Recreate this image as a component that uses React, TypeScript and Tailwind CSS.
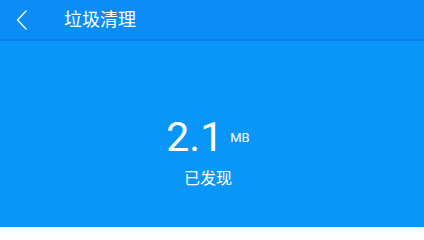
export default function App() {
  return (
    <div
      className="flex h-[227px] w-[424px] flex-col overflow-hidden bg-[#0896f9] text-white"
      style={{ fontFamily: '"Roboto", "Noto Sans CJK SC", sans-serif' }}
    >
      {/* Header */}
      <div className="flex h-[41px] items-center border-b-2 border-[#0a80e4] bg-[#0b8cf6]">
        <svg
          width="12"
          height="22"
          viewBox="0 0 12 22"
          className="ml-[16px]"
          fill="none"
          stroke="white"
          strokeWidth="1.3"
        >
          <path d="M10.5 1.5 L1.5 11 L10.5 20.5" />
        </svg>
        <span className="ml-[36px] text-[18px] leading-none">垃圾清理</span>
      </div>

      {/* Body */}
      <div className="flex flex-1 flex-col items-center pr-[8px] pt-[76px]">
        <div className="flex items-start">
          <span className="text-[41px] font-normal leading-none">2.1</span>
          <span className="ml-[7px] mt-[14px] text-[13px] leading-none">MB</span>
        </div>
        <span className="mt-[13px] text-[16px] leading-none">已发现</span>
      </div>
    </div>
  );
}
